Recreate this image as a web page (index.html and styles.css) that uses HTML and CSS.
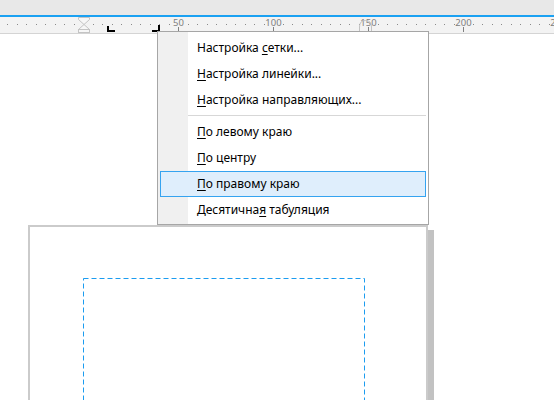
FILE: index.html
```html
<!DOCTYPE html>
<html lang="ru">
<head>
    <meta charset="UTF-8">
    <title>Линейка</title>
    <link rel="stylesheet" href="styles.css">
</head>
<body>
    <div class="app">
        <div class="titlebar"></div>
        <div class="ruler">
            <svg id="ruler-svg" width="554" height="16" viewBox="0 0 554 16">
                <g id="dots" fill="#8a8a8a"></g>
                <g id="labels" class="ruler-labels"></g>
                <!-- left indent -->
                <g fill="#f7f7f7" stroke="#c4c4c4" stroke-width="1">
                    <path d="M78.5 0.5 H89.5 V2.5 L84 7.5 L78.5 2.5 Z"/>
                    <path d="M84 7.5 L89.5 12.5 H78.5 Z"/>
                    <rect x="78.5" y="12.5" width="11" height="3"/>
                </g>
                <!-- tabs -->
                <g fill="#000">
                    <rect x="107" y="9" width="2" height="6"/>
                    <rect x="107" y="13" width="8" height="2"/>
                    <rect x="158" y="8" width="2" height="7"/>
                    <rect x="152" y="13" width="8" height="2"/>
                </g>
                <!-- right indent -->
                <path d="M359.5 16 V10 Q359.5 3.5 365.5 3.5 Q371.5 3.5 371.5 10 V16" fill="none" stroke="#c2c2c2"/>
            </svg>
        </div>
        <div class="workspace">
            <div class="page">
                <svg class="margins" width="282" height="200">
                    <rect x="0.5" y="0.5" width="281" height="300" fill="none" stroke="#1b9cf0" stroke-dasharray="5 3"/>
                </svg>
            </div>
        </div>

        <div class="context-menu">
            <div class="menu-item">Настройка <u>с</u>етки...</div>
            <div class="menu-item"><u>Н</u>астройка линейки...</div>
            <div class="menu-item"><u>Н</u>астройка направляющих...</div>
            <div class="menu-separator"></div>
            <div class="menu-item"><u>П</u>о левому краю</div>
            <div class="menu-item"><u>П</u>о центру</div>
            <div class="menu-item active"><u>П</u>о правому краю</div>
            <div class="menu-item">Десятична<u>я</u> табуляция</div>
        </div>
    </div>
    <script>
        // ruler: zero at x=83, 1.9px per unit
        const NS = "http://www.w3.org/2000/svg";
        const zero = 83;
        const step = 9.5; // 5 units
        const dots = document.getElementById("dots");
        const labels = document.getElementById("labels");

        for (let k = -8; k <= 50; k++) {
            const x = Math.round(zero + k * step);
            if (k % 10 === 0) {
                if (k <= 0) continue;
                const text = document.createElementNS(NS, "text");
                text.setAttribute("x", x + 0.5);
                text.setAttribute("y", 9);
                text.setAttribute("text-anchor", "middle");
                text.textContent = k * 5;
                labels.appendChild(text);

                const tick = document.createElementNS(NS, "rect");
                tick.setAttribute("x", x);
                tick.setAttribute("y", 10);
                tick.setAttribute("width", 1);
                tick.setAttribute("height", 5);
                labels.appendChild(tick);
            } else {
                const dot = document.createElementNS(NS, "rect");
                dot.setAttribute("x", x);
                dot.setAttribute("y", 7);
                dot.setAttribute("width", 1);
                dot.setAttribute("height", 1);
                dots.appendChild(dot);
            }
        }
    </script>
</body>
</html>
```

FILE: styles.css
```css
* {
    margin: 0;
    padding: 0;
    box-sizing: border-box;
}

body {
    font-family: 'Noto Sans', 'Liberation Sans', sans-serif;
    background: #fff;
    width: 554px;
    height: 400px;
    overflow: hidden;
}

.app {
    position: relative;
    height: 400px;
    overflow: hidden;
}

.titlebar {
    height: 17px;
    background: #e8e8e8;
    border-bottom: 2px solid #1ba1f2;
}

.ruler {
    height: 17px;
    background: #f3f3f3;
    border-bottom: 1px solid #d4d4d4;
}

.ruler svg {
    display: block;
}

.ruler-labels {
    font-family: 'Noto Sans', sans-serif;
    font-size: 9.5px;
    fill: #808080;
}

.workspace {
    padding: 191px 0 0 28px;
}

.page {
    width: 400px;
    height: 300px;
    border: 2px solid #cbcbcb;
    background: #fff;
    box-shadow: 6px 5px 0 #c2c2c2;
}

.margins {
    display: block;
    margin: 51px 0 0 53px;
}

/* context menu */
.context-menu {
    position: absolute;
    left: 157px;
    top: 31px;
    width: 272px;
    padding: 3px 0 1px;
    border: 1px solid #a6a6a6;
    background: linear-gradient(to right, #f0f0f0 30px, #fff 30px);
    font-size: 12px;
    color: #000;
}

.menu-item {
    height: 26px;
    line-height: 24px;
    margin: 0 2px;
    padding-left: 36px;
    border: 1px solid transparent;
    white-space: nowrap;
}

.menu-item u {
    text-underline-offset: 2px;
}

.menu-item.active {
    background: #dfeefc;
    border-color: #35a3f0;
}

.menu-separator {
    margin: 2px 2px 3px 30px;
    border-top: 1px solid #d7d7d7;
}
```
